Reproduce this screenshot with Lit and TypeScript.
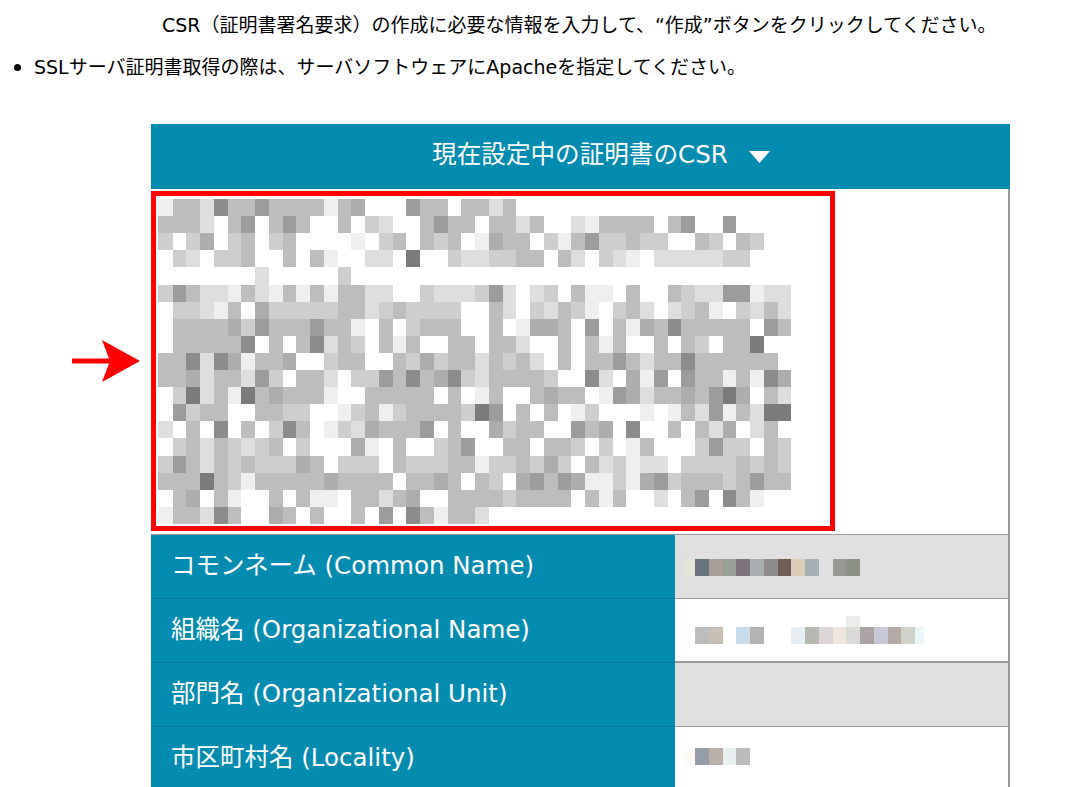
import { LitElement, html, css, svg } from "lit";
import { customElement } from "lit/decorators.js";

const GREY: Record<string, string> = {
  f: "#ffffff", e: "#efefef", d: "#dedede", c: "#cecece", b: "#bdbdbd",
  a: "#adadad", "9": "#9c9c9c", "8": "#8c8c8c", "7": "#7b7b7b",
};

const MOSAIC = [
  "ebbd8bb9bb" + "bbebafff9b" + "bfbbdb",
  "bbbdfb9fb9" + "bffbfcdffb" + "9bbfbbdbff" + "debbbbfb9f" + "f9",
  "cfcafcbfcb" + "ffffefcbfb" + "cbfeabbfce" + "b9ccbccffb" + "cfbc",
  "fcdfccbffb" + "fbeffddf7f" + "fcddccbbfb" + "dfcdefdddd" + "dcc",
  "fffffffdff" + "fffc",
  "c9bddebdeb" + "ebebbddffc" + "dddc9dfdcf" + "beefbffbcd" + "d99edd",
  "fccdebfacc" + "cccbbdcbcc" + "ccffbdfcdb" + "cefcbdfdcb" + "efcdbd",
  "fbbbbac9bb" + "b9bbefbfcb" + "bbffbfeaab" + "f9fbeab8bb" + "bbbf9b",
  "fbbbbb8fbf" + "b8dbcfbebf" + "fbbfbbdffb" + "fbebffbfbc" + "fbb7ff",
  "bb8d8aebba" + "ffcbbffbca" + "cbbdbcbdfb" + "fbb9bdbb8b" + "bbbbbf",
  "bbadbbd9cf" + "bbdfcc9b8b" + "a8cdbbbbcf" + "f8dfae9f9b" + "bebe8a",
  "fc7dbe7bab" + "bbeffbbbbb" + "fbfebffbab" + "bfe9adbbab" + "97afbd",
  "f9cbbffbbc" + "cffecbecbb" + "bbc79fbfbf" + "ecfffefebd" + "9ebd77",
  "dfbf8fbfc8" + "bfecdabbb9" + "fbffacbbff" + "9baf8ffbfb" + "dafdbf",
  "fcbdbcdcbf" + "cfffaefbff" + "cb9ffbbfbb" + "cfcfebfffc" + "9ccfbc",
  "c9bdbcbccc" + "abfcccfbcc" + "cbbeccbcac" + "fbdceddfcc" + "ccbcbc",
  "bbb7bcebbb" + "bbabbbbfbb" + "abfbcfa9b9" + "aeecea9cbb" + "bcb9bb",
  "fbafbeffbf" + "beefbbdbaf" + "fbbbbcbbbb" + "fbebffdfb9" + "f8beff",
  "ebbd8bffab" + "fbffbf9f8b" + "ebbd",
];

const CW = 13.75;
const CH = 17.1;

type Blur = { x: number; top?: boolean; w?: number; c: string };

const ROWS: { label: string; dy: number; blur: Blur[] }[] = [
  {
    label: "コモンネーム (Common Name)",
    dy: -8,
    blur: ["#e5e5d8", "#68737d", "#a89f99", "#96a096", "#7d727c", "#a8aeb0", "#8e8c8c", "#705f56", "#dccdb8", "#a6b1b6", "", "#999993", "#8d9289"]
      .map((c, i) => ({ x: i, c })),
  },
  {
    label: "組織名 (Organizational Name)",
    dy: -3,
    blur: [
      { x: 1, c: "#bdbdbd" }, { x: 2, c: "#c8c0b6" }, { x: 4, c: "#c8dcec" }, { x: 5, c: "#b5b3b3" },
      { x: 8, c: "#e6edf3" }, { x: 9, c: "#b8b8b3" }, { x: 10, c: "#dcd5d5" }, { x: 11, c: "#ece6dd" },
      { x: 12, c: "#d9d9d6" }, { x: 13, c: "#aaa4a4" }, { x: 14, c: "#c8c9d8" }, { x: 15, c: "#b4aaa6" },
      { x: 16, c: "#d0d1ca" }, { x: 17, w: 8.5, c: "#eaf5f8" }, { x: 12, top: true, c: "#ebedeb" },
    ],
  },
  { label: "部門名 (Organizational Unit)", dy: 0, blur: [] },
  {
    label: "市区町村名 (Locality)",
    dy: -11,
    blur: ["#fdfaf6", "#969ca8", "#bab0aa", "#e8efef", "#bcbcb8"].map((c, i) => ({ x: i, c })),
  },
];

@customElement("app-root")
export class AppRoot extends LitElement {
  static styles = css`
    :host {
      display: block;
      position: relative;
      width: 1088px;
      height: 787px;
      overflow: hidden;
      background: #fff;
      color: #000;
      font-family: "DejaVu Sans", "Noto Sans CJK JP", sans-serif;
      font-size: 19px;
      line-height: 28px;
    }
    .intro {
      margin: 0;
      padding: 11px 0 0 162px;
      white-space: nowrap;
    }
    .note {
      display: flex;
      align-items: center;
      gap: 13px;
      margin: 0;
      padding: 14px 0 0 14px;
      white-space: nowrap;
    }
    .dot {
      width: 7px;
      height: 7px;
      border-radius: 50%;
      background: #000;
    }
    .table {
      margin: 43px 0 0 151px;
      width: 859px;
    }
    .head {
      height: 65px;
      box-sizing: border-box;
      padding-left: 41px;
      background: #048cb0;
      color: #fff;
      font-size: 24.6px;
      display: flex;
      align-items: center;
      justify-content: center;
      gap: 21px;
      white-space: nowrap;
    }
    .head-text {
      padding-bottom: 4px;
    }
    .tri {
      width: 21px;
      height: 12px;
      display: block;
    }
    .body {
      border-right: 2px solid #999;
    }
    .csr {
      height: 346px;
      box-sizing: border-box;
      padding-top: 2px;
      border-bottom: 1px solid #999;
    }
    .box {
      width: 684px;
      height: 340px;
      box-sizing: border-box;
      border: 5px solid #f00;
      padding: 3px 0 0 2px;
    }
    .mosaic {
      display: block;
    }
    .row {
      display: grid;
      grid-template-columns: 524px 1fr;
      height: 64px;
    }
    .row .name {
      background: #048cb0;
      color: #fff;
      font-size: 24.5px;
      display: flex;
      align-items: center;
      box-sizing: border-box;
      padding: 0 0 2px 20px;
      border-bottom: 1px solid #037a9a;
      white-space: nowrap;
    }
    .row .val {
      display: flex;
      align-items: center;
      padding-left: 9px;
      border-bottom: 1px solid #999;
    }
    .row:nth-child(3) .val {
      border-bottom-width: 2px;
    }
    .row.alt .val {
      background: #e0e0e0;
    }
    .blur {
      display: block;
    }
    .arrow {
      position: absolute;
      left: 71px;
      top: 339px;
      width: 70px;
      height: 44px;
    }
  `;

  private mosaic() {
    const rects = MOSAIC.flatMap((row, r) =>
      row.split("").map((g, c) => {
        if (g === "f") return null;
        const x = c === 0 ? 0 : 14.5 + (c - 1) * CW;
        const w = c === 0 ? 14.5 : CW;
        return svg`<rect x=${x} y=${r * CH} width=${w} height=${CH} fill=${GREY[g]} />`;
      })
    );
    return html`<svg class="mosaic" width="650" height="326" viewBox="0 0 650 326" shape-rendering="crispEdges">${rects}</svg>`;
  }

  private blur(cells: Blur[], dy: number) {
    return html`<svg class="blur" width="300" height="48" viewBox="0 -24 300 48" shape-rendering="crispEdges">
      ${cells.filter((b) => b.c).map((b) => {
        const x = b.x === 0 ? 0 : 11 + (b.x - 1) * CW;
        const w = b.x === 0 ? 11 : b.w ?? CW;
        return b.top
          ? svg`<rect x=${x} y=${dy - 11} width=${w} height="11" fill=${b.c} />`
          : svg`<rect x=${x} y=${dy} width=${w} height="17" fill=${b.c} />`;
      })}
    </svg>`;
  }

  render() {
    return html`
      <p class="intro">CSR（証明書署名要求）の作成に必要な情報を入力して、“作成”ボタンをクリックしてください。</p>
      <div class="note"><span class="dot"></span><span>SSLサーバ証明書取得の際は、サーバソフトウェアにApacheを指定してください。</span></div>
      <section class="table">
        <div class="head">
          <span class="head-text">現在設定中の証明書のCSR</span>
          <svg class="tri" viewBox="0 0 21 12"><path d="M0 0H21L10.5 12Z" fill="#fff" /></svg>
        </div>
        <div class="body">
          <div class="csr"><div class="box">${this.mosaic()}</div></div>
          ${ROWS.map(
            (r, i) => html`<div class="row ${i % 2 === 0 ? "alt" : ""}">
              <div class="name">${r.label}</div>
              <div class="val">${r.blur.length ? this.blur(r.blur, r.dy) : ""}</div>
            </div>`
          )}
        </div>
      </section>
      <svg class="arrow" viewBox="0 0 70 44">
        <path d="M1 19.5H38L31 1L69 22L31 43L38 24.5H1Z" fill="#f00" />
      </svg>
    `;
  }
}
